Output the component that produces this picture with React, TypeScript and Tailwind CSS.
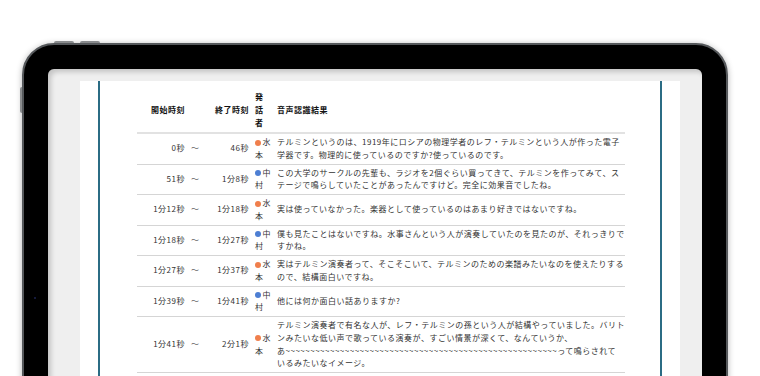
const SPEAKERS = {
  mizumoto: { first: "水", rest: "本", dot: "bg-[#f07f4c]" },
  nakamura: { first: "中", rest: "村", dot: "bg-[#4d7fd3]" },
};

type Row = { start: string; end: string; sp: keyof typeof SPEAKERS; lines: string[] };

const ROWS: Row[] = [
  {
    start: "0秒", end: "46秒", sp: "mizumoto",
    lines: [
      "テルミンというのは、1919年にロシアの物理学者のレフ・テルミンという人が作った電子",
      "学器です。物理的に使っているのですか?使っているのです。",
    ],
  },
  {
    start: "51秒", end: "1分8秒", sp: "nakamura",
    lines: [
      "この大学のサークルの先輩も、ラジオを2個ぐらい買ってきて、テルミンを作ってみて、ス",
      "テージで鳴らしていたことがあったんですけど。完全に効果音でしたね。",
    ],
  },
  {
    start: "1分12秒", end: "1分18秒", sp: "mizumoto",
    lines: ["実は使っていなかった。楽器として使っているのはあまり好きではないですね。"],
  },
  {
    start: "1分18秒", end: "1分27秒", sp: "nakamura",
    lines: [
      "僕も見たことはないですね。水事さんという人が演奏していたのを見たのが、それっきりで",
      "すかね。",
    ],
  },
  {
    start: "1分27秒", end: "1分37秒", sp: "mizumoto",
    lines: [
      "実はテルミン演奏者って、そこそこいて、テルミンのための楽譜みたいなのを使えたりする",
      "ので、結構面白いですね。",
    ],
  },
  {
    start: "1分39秒", end: "1分41秒", sp: "nakamura",
    lines: ["他には何か面白い話ありますか?"],
  },
  {
    start: "1分41秒", end: "2分1秒", sp: "mizumoto",
    lines: [
      "テルミン演奏者で有名な人が、レフ・テルミンの孫という人が結構やっていました。バリト",
      "ンみたいな低い声で歌っている演奏が、すごい情景が深くて、なんていうか、",
      "あ" + "~".repeat(55) + "って鳴らされて",
      "いるみたいなイメージ。",
    ],
  },
  {
    start: "2分3秒", end: "2分12秒", sp: "nakamura",
    lines: ["役場の後援ってなんかこういうふうな形でやっているんですかね。"],
  },
];

const td = "border-b border-[#d5d5d5] px-[3px] py-[2px] align-middle leading-[12.75px]";
const th = "border-b-2 border-[#e2e2e2] px-[3px] py-[3px] align-middle leading-[13px] font-bold text-[#111]";

export default function App() {
  return (
    <div className="w-[760px] h-[376px] overflow-hidden bg-white">
      <div className="relative ml-[22px] mt-[43px] w-[706px] h-[510px] rounded-[32px] bg-black border-2 border-[#55585b] p-[24px] shadow-[0_1px_6px_rgba(0,0,0,0.3)]">
        {/* hardware buttons */}
        <div className="absolute left-[30px] top-[-4px] w-[20px] h-[2px] rounded-t-sm bg-[#8a8c8e]" />
        <div className="absolute left-[56px] top-[-4px] w-[20px] h-[2px] rounded-t-sm bg-[#8a8c8e]" />
        <div className="absolute left-[-4px] top-[42px] w-[2px] h-[26px] rounded-l-sm bg-[#8a8c8e]" />
        <div className="absolute left-[10px] top-[252px] w-[2px] h-[2px] rounded-full bg-[#1c2350]" />

        <div className="h-full rounded-[6px] bg-[#efefef] pl-[32px] pt-[12px] overflow-hidden shadow-[inset_3px_3px_5px_rgba(0,0,0,0.18)]">
          <div className="w-[600px] h-full bg-white px-[18px]">
            <div className="h-full border-x-2 border-[#2b6c84] pt-[6px] pl-[37px] font-['Noto_Sans_CJK_JP',sans-serif] text-[8px] tracking-[0.5px] text-[#333]">
              <table className="w-[488px] table-fixed border-collapse">
                <colgroup>
                  <col className="w-[51px]" />
                  <col className="w-[18px]" />
                  <col className="w-[46px]" />
                  <col className="w-[22px]" />
                  <col className="w-[351px]" />
                </colgroup>
                <thead>
                  <tr>
                    <th className={`${th} text-right`}>開始時刻</th>
                    <th className={th}></th>
                    <th className={`${th} text-right`}>終了時刻</th>
                    <th className={`${th} text-left`}>発<br />話<br />者</th>
                    <th className={`${th} text-left`}>音声認識結果</th>
                  </tr>
                </thead>
                <tbody>
                  {ROWS.map((r, i) => {
                    const s = SPEAKERS[r.sp];
                    return (
                      <tr key={i}>
                        <td className={`${td} text-right whitespace-nowrap`}>{r.start}</td>
                        <td className={`${td} text-[#666]`}>〜</td>
                        <td className={`${td} text-right whitespace-nowrap`}>{r.end}</td>
                        <td className={`${td} whitespace-nowrap`}>
                          <span className={`inline-block w-[6px] h-[6px] rounded-full mr-[1.5px] align-[-0.5px] ${s.dot}`} />
                          {s.first}
                          <br />
                          {s.rest}
                        </td>
                        <td className={`${td} whitespace-nowrap`}>
                          {r.lines.map((l, j) => (
                            <div key={j}>{l}</div>
                          ))}
                        </td>
                      </tr>
                    );
                  })}
                </tbody>
              </table>
            </div>
          </div>
        </div>
      </div>
    </div>
  );
}
